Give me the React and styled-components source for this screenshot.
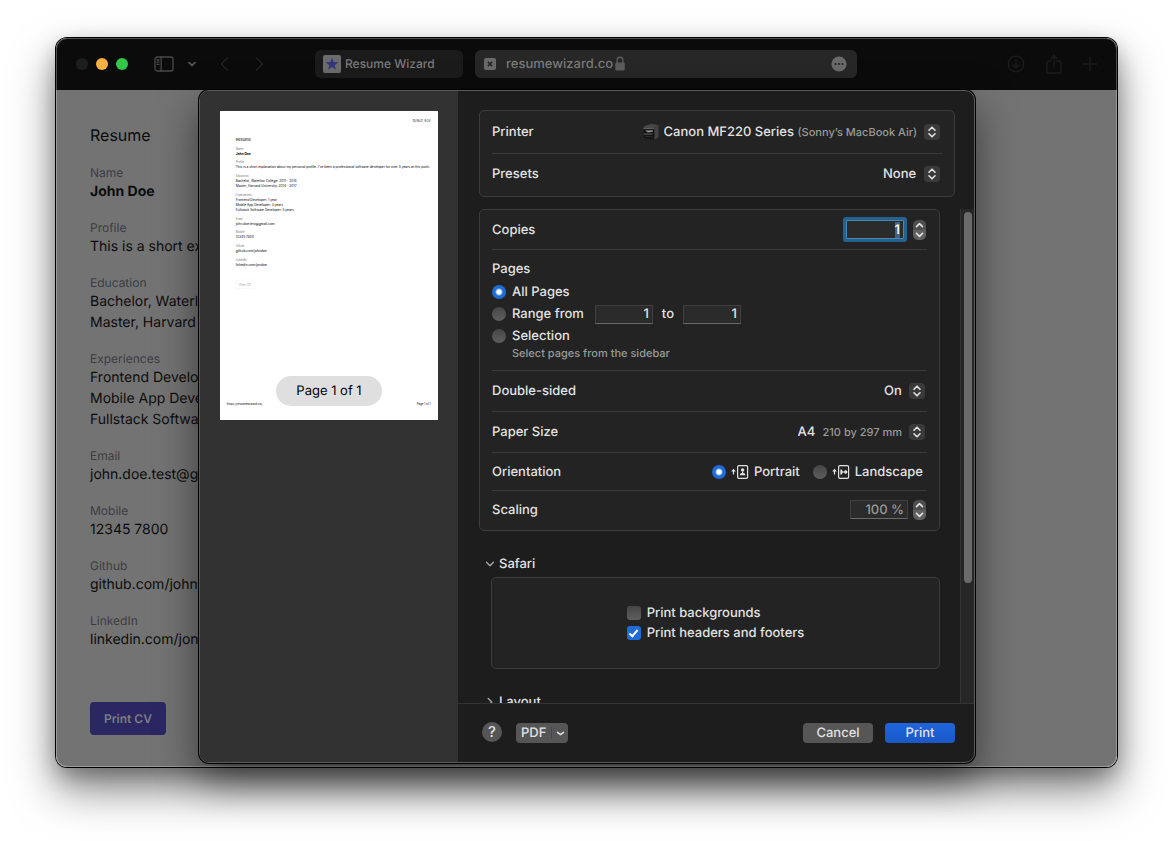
import styled, { createGlobalStyle } from "styled-components"

const resume = [
  { label: "Name", lines: ["John Doe"], bold: true },
  { label: "Profile", lines: ["This is a short explanation about my personal profile. I've been a professional software developer for over 5 years at this point."] },
  { label: "Education", lines: ["Bachelor, Waterloo College: 2011 - 2014", "Master, Harvard University: 2014 - 2017"] },
  { label: "Experiences", lines: ["Frontend Developer: 1 year", "Mobile App Developer: 3 years", "Fullstack Software Developer: 5 years"] },
  { label: "Email", lines: ["john.doe.test@gmail.com"] },
  { label: "Mobile", lines: ["12345 7800"] },
  { label: "Github", lines: ["github.com/johndoe"] },
  { label: "LinkedIn", lines: ["linkedin.com/jondoe"] },
]

const UpDown = () => (
  <PopupMark aria-hidden="true">
    <svg width="16" height="16" viewBox="0 0 16 16" fill="none" stroke="#e2e2e2" strokeWidth="1.6" strokeLinecap="round" strokeLinejoin="round">
      <path d="M5 6.2 8 3.2l3 3M5 9.8l3 3 3-3" />
    </svg>
  </PopupMark>
)

const Stepper = ({ name }) => (
  <StepperBox>
    <button type="button" aria-label={`Increase ${name}`}>
      <svg width="9" height="6" viewBox="0 0 9 6"><path d="M1.5 4.6 4.5 1.6l3 3" /></svg>
    </button>
    <button type="button" aria-label={`Decrease ${name}`}>
      <svg width="9" height="6" viewBox="0 0 9 6"><path d="M1.5 1.4l3 3 3-3" /></svg>
    </button>
  </StepperBox>
)

const PrinterIcon = () => (
  <svg width="18" height="18" viewBox="0 0 18 18" aria-hidden="true">
    <path d="M2 3.2 8.6 1l7.2.8-3 2.6-10.4.2z" fill="#484848" />
    <path d="M1.2 4.4h11v2H1.6z" fill="#5c5c5c" />
    <path d="M12.2 4.4 16.6 2v12.4l-4.4 2.4z" fill="#414141" />
    <path d="M1.8 6.2h10.4v10.6L2.2 15z" fill="#101010" />
    <path d="M3 7.6l7.8-.4v1.6l-5 .8z" fill="#87929a" />
    <path d="M1.6 10.6h9.8l-1.4 1.2H2z" fill="#555" />
    <path d="M3 13l8.6.8v.8L3 13.8z" fill="#3a3a3a" />
  </svg>
)

const Figure = ({ turned }) => (
  <svg width="18" height="16" viewBox="0 0 18 16" fill="none" aria-hidden="true">
    <path d="M2.5 10.5V6" stroke="#e2e2e2" strokeWidth="1.2" />
    <path d="M.2 7.6 2.5 4.8l2.3 2.8z" fill="#e2e2e2" />
    <rect x="6.6" y="1.6" width="10" height="12.8" rx="1.4" stroke="#e2e2e2" strokeWidth="1.2" />
    <g fill="#e2e2e2" transform={turned ? "rotate(90 11.6 8)" : undefined}>
      <circle cx="11.6" cy="5.9" r="1.7" />
      <path d="M8.8 11.2c0-1.6 1-2 2.2-2.2V7.500h1.200V9c1.200.2 2.200.6 2.200 2.200z" />
    </g>
  </svg>
)

// miniature of the printed page, drawn at four units to the pixel
function Thumbnail() {
  let y = 113
  return (
    <Paper viewBox="0 0 872 1236" role="img" aria-label="Preview of page 1">
      <text x="770" y="43" fontSize="11">10/19/21, 9:24</text>
      <text x="63" y="118" fontSize="16">Resume</text>
      {resume.map((item) => {
        y += 41
        const top = y
        y += 20 * item.lines.length - 6
        return (
          <g key={item.label}>
            <text x="63" y={top} fontSize="11" fill="#777">{item.label}</text>
            {item.lines.map((line, i) => (
              <text key={line} x="63" y={top + 20 + i * 20} fontSize="13" fontWeight={item.bold ? 700 : 400}>{line}</text>
            ))}
          </g>
        )
      })}
      <rect x="63" y="676" width="75" height="34" fill="none" stroke="#f6f6f6" strokeWidth="3" />
      <text x="77" y="698" fontSize="12" fill="#999">Print CV</text>
      <text x="27" y="1176" fontSize="12">https://resumewizard.co/</text>
      <text x="787" y="1176" fontSize="11">Page 1 of 1</text>
    </Paper>
  )
}

function BrowserBar() {
  return (
    <Toolbar>
      <Lights>
        <Light $color="#1e1e1e" />
        <Light $color="#fdb041" />
        <Light $color="#32c747" />
      </Lights>
      <SidebarGroup>
        <IconButton type="button" aria-label="Sidebar" $tone="#484848">
          <svg width="20" height="16" viewBox="0 0 20 16">
            <rect x="1" y="1" width="18" height="14" rx="2" />
            <path d="M7.2 1v14M3 4h2M3 6.2h2M3 8.4h2" />
          </svg>
        </IconButton>
        <IconButton type="button" aria-label="Sidebar options" $tone="#5c5c5c">
          <svg width="10" height="6" viewBox="0 0 10 6"><path d="M2 1.6l3 2.8 3-2.8" strokeWidth="1.6" /></svg>
        </IconButton>
      </SidebarGroup>
      <HistoryGroup>
        <IconButton type="button" aria-label="Back" $tone="#232323">
          <svg width="9" height="16" viewBox="0 0 9 16"><path d="M7.5 2 1.5 8l6 6" strokeWidth="1.4" /></svg>
        </IconButton>
        <IconButton type="button" aria-label="Forward" $tone="#232323">
          <svg width="9" height="16" viewBox="0 0 9 16"><path d="M1.5 2l6 6-6 6" strokeWidth="1.4" /></svg>
        </IconButton>
      </HistoryGroup>
      <Tab type="button">
        <svg width="18" height="18" viewBox="0 0 18 18" aria-hidden="true">
          <rect width="18" height="18" rx="2" fill="#6c6c6c" />
          <path d="M9 2.800l1.700 4.300 4.600.2-3.600 2.900 1.300 4.500L9 12.100l-4 2.600 1.300-4.500-3.600-2.900 4.600-.2z" fill="#34377c" />
        </svg>
        Resume Wizard
      </Tab>
      <Address>
        <svg width="12" height="12" viewBox="0 0 12 12" aria-hidden="true">
          <rect width="12" height="12" rx="2" fill="#6a6a6a" />
          <path d="M3.800 3.800l4.400 4.400M8.200 3.800 3.800 8.200" stroke="#222" strokeWidth="1.4" />
        </svg>
        <span>resumewizard.co</span>
        <svg width="10" height="15" viewBox="0 0 10 15" aria-hidden="true">
          <path d="M2.200 7V4a2.800 2.800 0 0 1 5.600 0v3" fill="none" stroke="#5c5c5c" strokeWidth="1.4" />
          <rect x=".2" y="6.400" width="9.600" height="8" rx="1.400" fill="#5c5c5c" />
        </svg>
        <MoreButton type="button" aria-label="Page menu">
          <svg width="16" height="16" viewBox="0 0 16 16">
            <circle cx="8" cy="8" r="7.600" fill="#6a6a6a" />
            <circle cx="4.500" cy="8" r="1.100" fill="#262626" />
            <circle cx="8" cy="8" r="1.100" fill="#262626" />
            <circle cx="11.500" cy="8" r="1.100" fill="#262626" />
          </svg>
        </MoreButton>
      </Address>
      <RightGroup>
        <IconButton type="button" aria-label="Downloads" $tone="#1d1d1d">
          <svg width="18" height="18" viewBox="0 0 18 18"><circle cx="9" cy="9" r="7.800" /><path d="M9 5v8M6 10l3 3 3-3" /></svg>
        </IconButton>
        <IconButton type="button" aria-label="Share" $tone="#1d1d1d">
          <svg width="16" height="20" viewBox="0 0 16 20"><path d="M5 7H2.600A1.600 1.600 0 0 0 1 8.600v8.800A1.600 1.600 0 0 0 2.600 19h10.800a1.600 1.600 0 0 0 1.600-1.600V8.600A1.600 1.600 0 0 0 13.400 7H11M8 13V1.500M5 4.500l3-3 3 3" /></svg>
        </IconButton>
        <IconButton type="button" aria-label="New tab" $tone="#1d1d1d">
          <svg width="14" height="14" viewBox="0 0 14 14"><path d="M7 .5v13M.5 7h13" /></svg>
        </IconButton>
      </RightGroup>
    </Toolbar>
  )
}

function PrintSheet() {
  return (
    <Sheet role="dialog" aria-label="Print">
      <Preview>
        <Thumbnail />
        <Pill>Page 1 of 1</Pill>
      </Preview>

      <Options>
        <TopArea>
          <Box>
            <Row $height={42} $line>
              <label htmlFor="printer">Printer</label>
              <Popup>
                <PrinterIcon />
                <Select id="printer"><option>Canon MF220 Series</option></Select>
                <Note>(Sonny’s MacBook Air)</Note>
                <UpDown />
              </Popup>
            </Row>
            <Row $height={40}>
              <label htmlFor="presets">Presets</label>
              <Popup>
                <Select id="presets"><option>None</option></Select>
                <UpDown />
              </Popup>
            </Row>
            <BoxEnd />
          </Box>
        </TopArea>

        <Scroller>
          <ScrollBody>
            <Box>
              <Row $height={39} $line>
                <label htmlFor="copies">Copies</label>
                <Field $gap={9}>
                  <NumberInput id="copies" defaultValue="1" autoFocus onFocus={(e) => e.target.select()} />
                  <Stepper name="copies" />
                </Field>
              </Row>
              <Pages role="radiogroup" aria-label="Pages">
                <PagesTitle>Pages</PagesTitle>
                <Choice>
                  <Radio name="pages" id="all" defaultChecked />
                  <label htmlFor="all">All Pages</label>
                </Choice>
                <Choice>
                  <Radio name="pages" id="range" />
                  <label htmlFor="range">Range from</label>
                  <RangeFields>
                    <NumberInput aria-label="First page" defaultValue="1" />
                    <span>to</span>
                    <NumberInput aria-label="Last page" defaultValue="1" />
                  </RangeFields>
                </Choice>
                <Choice>
                  <Radio name="pages" id="selection" />
                  <label htmlFor="selection">Selection</label>
                </Choice>
                <Hint>Select pages from the sidebar</Hint>
              </Pages>
              <Row $height={40} $line>
                <label htmlFor="sided">Double-sided</label>
                <Popup>
                  <Select id="sided"><option>On</option></Select>
                  <UpDown />
                </Popup>
              </Row>
              <Row $height={40} $line>
                <label htmlFor="paper">Paper Size</label>
                <Popup>
                  <Select id="paper"><option>A4</option></Select>
                  <Note $wide>210 by 297 mm</Note>
                  <UpDown />
                </Popup>
              </Row>
              <Row $height={37} $line>
                <span>Orientation</span>
                <Orientation role="radiogroup" aria-label="Orientation">
                  <OrientLabel>
                    <Radio name="orientation" defaultChecked />
                    <Figure />
                    Portrait
                  </OrientLabel>
                  <OrientLabel>
                    <Radio name="orientation" />
                    <Figure turned />
                    Landscape
                  </OrientLabel>
                </Orientation>
              </Row>
              <Row $height={37}>
                <label htmlFor="scaling">Scaling</label>
                <Field $gap={5}>
                  <NumberInput id="scaling" defaultValue="100 %" $muted />
                  <Stepper name="scaling" />
                </Field>
              </Row>
              <BoxEnd />
            </Box>

            <Disclosure type="button" aria-expanded="true">
              <svg width="10" height="10" viewBox="0 0 10 10"><path d="M1.500 3.200 5 6.800l3.500-3.600" /></svg>
              Safari
            </Disclosure>
            <SafariBox>
              <CheckList>
                <label><Check />Print backgrounds</label>
                <label><Check defaultChecked />Print headers and footers</label>
              </CheckList>
            </SafariBox>
            <Disclosure type="button" aria-expanded="false">
              <svg width="10" height="10" viewBox="0 0 10 10"><path d="M3.200 1.500 6.800 5l-3.600 3.500" /></svg>
              Layout
            </Disclosure>
          </ScrollBody>
          <Track><Thumb /></Track>
        </Scroller>

        <Footer>
          <Help type="button" aria-label="Help">?</Help>
          <PdfButton type="button">
            <span>PDF</span>
            <svg width="17" height="14" viewBox="0 0 17 14" fill="none" aria-hidden="true">
              <path d="M.5 1v12" stroke="#474747" />
              <path d="M6.500 6.400l3 2.200 3-2.200" stroke="#e2e2e2" strokeWidth="1.500" strokeLinecap="round" strokeLinejoin="round" />
            </svg>
          </PdfButton>
          <Actions>
            <PushButton type="button">Cancel</PushButton>
            <PushButton type="button" $primary>Print</PushButton>
          </Actions>
        </Footer>
      </Options>
    </Sheet>
  )
}

export default function App() {
  return (
    <>
      <GlobalStyle />
      <Desktop>
        <Window>
          <BrowserBar />
          <Stage>
            <ResumePage>
              <h1>Resume</h1>
              {resume.map((item) => (
                <Entry key={item.label} $bold={item.bold}>
                  <h2>{item.label}</h2>
                  {item.lines.map((line) => <p key={line}>{line}</p>)}
                </Entry>
              ))}
              <PrintCv type="button">Print CV</PrintCv>
            </ResumePage>
            <PrintSheet />
          </Stage>
        </Window>
      </Desktop>
    </>
  )
}

const GlobalStyle = createGlobalStyle`
  *, *::before, *::after{
    box-sizing: border-box;
  }
  body{
    margin: 0;
    background: #fff;
    font-family: Inter, "Liberation Sans", sans-serif;
    text-rendering: geometricPrecision;
  }
  button, input, select{
    font: inherit;
    color: inherit;
    text-rendering: inherit;
    margin: 0;
    padding: 0;
    border: none;
    background: none;
  }
  svg{
    display: block;
    flex: none;
  }
`;

const Desktop = styled.div`
  height: 100vh;
  padding: 38px 56px 74px;
  display: flex;
  overflow: hidden;
`;

const Window = styled.div`
  flex: 1;
  min-width: 0;
  display: flex;
  flex-direction: column;
  border: 1px solid rgba(255, 255, 255, 0.28);
  border-radius: 11px;
  background: linear-gradient(#0b0b0b 52px, #737373 52px) border-box;
  box-shadow: 0 0 0 1px #000, 0 22px 44px rgba(0, 0, 0, 0.5), 0 8px 20px rgba(0, 0, 0, 0.25);
`;

const Toolbar = styled.header`
  height: 51px;
  flex: none;
  display: flex;
  align-items: center;
  padding: 0 19px 2px;
  font-size: 12px;
  font-weight: 500;
  color: #7a7a7a;
`;

const Lights = styled.div`
  display: flex;
  gap: 8px;
`;

const Light = styled.span`
  width: 12px;
  height: 12px;
  border-radius: 50%;
  background: ${({ $color }) => $color};
`;

const IconButton = styled.button`
  display: flex;
  svg{
    fill: none;
    stroke: ${({ $tone }) => $tone};
    stroke-width: 1.3;
    stroke-linecap: round;
    stroke-linejoin: round;
  }
`;

const SidebarGroup = styled.div`
  display: flex;
  align-items: center;
  gap: 13px;
  margin-left: 26px;
`;

const HistoryGroup = styled.div`
  display: flex;
  gap: 26px;
  margin-left: 23px;
`;

const Tab = styled.button`
  width: 148px;
  height: 28px;
  margin-left: 51px;
  padding: 0 8px;
  display: flex;
  align-items: center;
  gap: 4px;
  border-radius: 6px;
  background: #1b1b1b;
`;

const Address = styled.div`
  flex: 0 1 382px;
  height: 28px;
  margin-left: 12px;
  padding: 0 10px 0 9px;
  display: flex;
  align-items: center;
  border-radius: 6px;
  background: #272727;
  font-size: 13px;
  span{
    margin: 0 2px 0 10px;
  }
`;

const MoreButton = styled.button`
  margin-left: auto;
`;

const RightGroup = styled.div`
  display: flex;
  align-items: center;
  gap: 21px;
  margin-left: auto;
`;

const Stage = styled.main`
  flex: 1;
  min-height: 0;
  display: grid;
  grid-template: minmax(0, 1fr) / minmax(0, 1fr);
`;

const ResumePage = styled.article`
  grid-area: 1 / 1;
  padding: 34px 33px;
  color: #0c0c0c;
  h1{
    margin: 0 0 19px;
    font-size: 16px;
    line-height: 22px;
    font-weight: 400;
  }
`;

const Entry = styled.section`
  margin-bottom: 18px;
  font-size: 14px;
  line-height: 21px;
  white-space: nowrap;
  h2{
    margin: 0;
    font-size: 12px;
    line-height: 16px;
    font-weight: 400;
    color: #3c3c43;
  }
  p{
    margin: 0;
    font-weight: ${({ $bold }) => ($bold ? 700 : 400)};
  }
`;

const PrintCv = styled.button`
  height: 33px;
  margin-top: 34px;
  padding: 0 14px;
  border-radius: 4px;
  background: #2a2763;
  color: #7d7d80;
  font-size: 12px;
  font-weight: 600;
`;

const Sheet = styled.section`
  grid-area: 1 / 1;
  z-index: 1;
  margin: 0 141px 3px 142px;
  display: flex;
  border: 1px solid #5a5a5a;
  border-radius: 10px;
  background: #1d1d1d;
  box-shadow: 0 0 0 1px #000, 0 18px 40px rgba(0, 0, 0, 0.5);
  font-size: 13px;
  font-weight: 500;
  color: #e2e2e2;
`;

const Preview = styled.aside`
  flex: none;
  display: grid;
  grid-template-rows: 309px;
  padding: 20px;
  border-radius: 9px 0 0 9px;
  background: #323232;
`;

const Paper = styled.svg`
  grid-area: 1 / 1;
  width: 218px;
  height: 309px;
  background: #fff;
  font-weight: 400;
  text-rendering: auto;
`;

const Pill = styled.div`
  grid-area: 1 / 1;
  align-self: end;
  justify-self: center;
  margin-bottom: 14px;
  padding: 0 20px;
  border-radius: 15px;
  background: #dfdfdf;
  color: #000;
  font-weight: 400;
  line-height: 30px;
`;

const Options = styled.div`
  flex: 1;
  min-width: 0;
  display: flex;
  flex-direction: column;
`;

const TopArea = styled.div`
  padding: 19px 19px 12px 21px;
`;

const Box = styled.div`
  border: 1px solid #3c3c3c;
  border-radius: 5px;
  background: #232323;
  padding: 0 12px;
`;

const BoxEnd = styled.div`
  height: 2px;
`;

const Row = styled.div`
  height: ${({ $height, $line }) => $height + ($line ? 1 : 0)}px;
  display: flex;
  align-items: center;
  justify-content: space-between;
  border-bottom: ${({ $line }) => ($line ? "1px solid #3a3a3a" : "none")};
`;

const Popup = styled.div`
  display: flex;
  align-items: center;
  padding-right: 2px;
  svg{
    margin-right: 4px;
  }
`;

const Select = styled.select`
  appearance: none;
  line-height: 16px;
  outline: none;
`;

const Note = styled.span`
  margin-left: ${({ $wide }) => ($wide ? 7 : 3)}px;
  font-size: 11px;
  color: #9a9a9a;
`;

const PopupMark = styled.span`
  margin-left: 7px;
  border-radius: 4px;
  background: #3a3a3a;
  svg{
    margin: 0;
  }
`;

const Field = styled.div`
  display: flex;
  align-items: center;
  gap: ${({ $gap }) => $gap}px;
  padding-right: 1px;
`;

const NumberInput = styled.input`
  width: 58px;
  height: 19px;
  padding: 0 3px 0 0;
  border: 1px solid #3f3f3f;
  border-bottom-color: #6a6a6a;
  background: #2b2b2b;
  color: ${({ $muted }) => ($muted ? "#9a9a9a" : "#e2e2e2")};
  text-align: right;
  outline: none;
  &:focus{
    border-color: #4b86ac;
    box-shadow: 0 0 0 3px #25628e;
    border-radius: 1px;
  }
  &::selection{
    background: #3f638b;
    color: #fff;
  }
`;

const StepperBox = styled.div`
  width: 13px;
  height: 20px;
  display: flex;
  flex-direction: column;
  border-radius: 5px;
  overflow: hidden;
  background: linear-gradient(#4e4e4e 50%, #606060 50%);
  button{
    flex: 1;
    display: flex;
    align-items: center;
    justify-content: center;
  }
  svg{
    fill: none;
    stroke: #e2e2e2;
    stroke-width: 1.6;
    stroke-linecap: round;
    stroke-linejoin: round;
  }
`;

const Pages = styled.div`
  height: 121px;
  padding-top: 9px;
  border-bottom: 1px solid #3a3a3a;
`;

const PagesTitle = styled.div`
  line-height: 20px;
  margin-bottom: 2px;
`;

const Choice = styled.div`
  height: 22px;
  display: flex;
  align-items: center;
  gap: 6px;
`;

const RangeFields = styled.div`
  display: flex;
  align-items: center;
  gap: 9px;
  margin-left: 5px;
`;

const Hint = styled.div`
  padding-left: 20px;
  font-size: 11px;
  line-height: 12px;
  color: #9a9a9a;
`;

const Radio = styled.input.attrs({ type: "radio" })`
  appearance: none;
  width: 14px;
  height: 14px;
  flex: none;
  border-radius: 50%;
  background: linear-gradient(#464646, #5e5e5e);
  &:checked{
    background: radial-gradient(circle, #fff 0 2px, transparent 4px), #1f6cd8;
  }
`;

const Orientation = styled.div`
  display: flex;
  gap: 13px;
  padding-right: 4px;
`;

const OrientLabel = styled.label`
  display: flex;
  align-items: center;
  gap: 5px;
`;

const Disclosure = styled.button`
  display: flex;
  align-items: center;
  gap: 4px;
  margin: 23px 0 3px 6px;
  line-height: 20px;
  svg{
    fill: none;
    stroke: #a5a5a5;
    stroke-width: 1.4;
    stroke-linecap: round;
    stroke-linejoin: round;
  }
`;

const SafariBox = styled(Box)`
  margin-left: 12px;
  padding: 25px 0;
  display: flex;
  justify-content: center;
`;

const CheckList = styled.div`
  display: flex;
  flex-direction: column;
  label{
    height: 20px;
    display: flex;
    align-items: center;
    gap: 6px;
  }
`;

const Check = styled.input.attrs({ type: "checkbox" })`
  appearance: none;
  width: 14px;
  height: 14px;
  display: grid;
  place-items: center;
  border-radius: 3px;
  background: linear-gradient(#464646, #5e5e5e);
  &:checked{
    background: #1f6cd8;
  }
  &:checked::before{
    content: "";
    width: 5px;
    height: 9px;
    margin-bottom: 2px;
    border: solid #fff;
    border-width: 0 2px 2px 0;
    transform: rotate(40deg);
  }
`;

const Scroller = styled.div`
  flex: 1;
  min-height: 0;
  display: flex;
`;

const ScrollBody = styled.div`
  flex: 1;
  min-width: 0;
  padding: 0 20px 0 21px;
  overflow: hidden;
`;

const Track = styled.div`
  width: 14px;
  padding: 3px 2px 3px 3px;
  border-left: 1px solid #333;
  background: #262626;
`;

const Thumb = styled.div`
  width: 8px;
  height: 76%;
  border-radius: 4px;
  background: #6b6b6b;
`;

const Footer = styled.footer`
  height: 59px;
  flex: none;
  display: flex;
  align-items: center;
  padding: 0 19px 0 24px;
  border-top: 1px solid #333;
`;

const Help = styled.button`
  width: 20px;
  height: 20px;
  margin-bottom: 3px;
  border-radius: 50%;
  background: #565656;
  font-size: 15px;
  line-height: 20px;
`;

const PdfButton = styled.button`
  height: 20px;
  margin-left: 14px;
  padding: 0 0 0 5px;
  display: flex;
  align-items: center;
  gap: 5px;
  border-radius: 4px;
  background: #565656;
`;

const Actions = styled.div`
  display: flex;
  gap: 12px;
  margin-left: auto;
`;

const PushButton = styled.button`
  width: 70px;
  height: 20px;
  border-radius: 4px;
  background: ${({ $primary }) => ($primary ? "linear-gradient(#1f66dc, #1a58c8)" : "#565656")};
`;
